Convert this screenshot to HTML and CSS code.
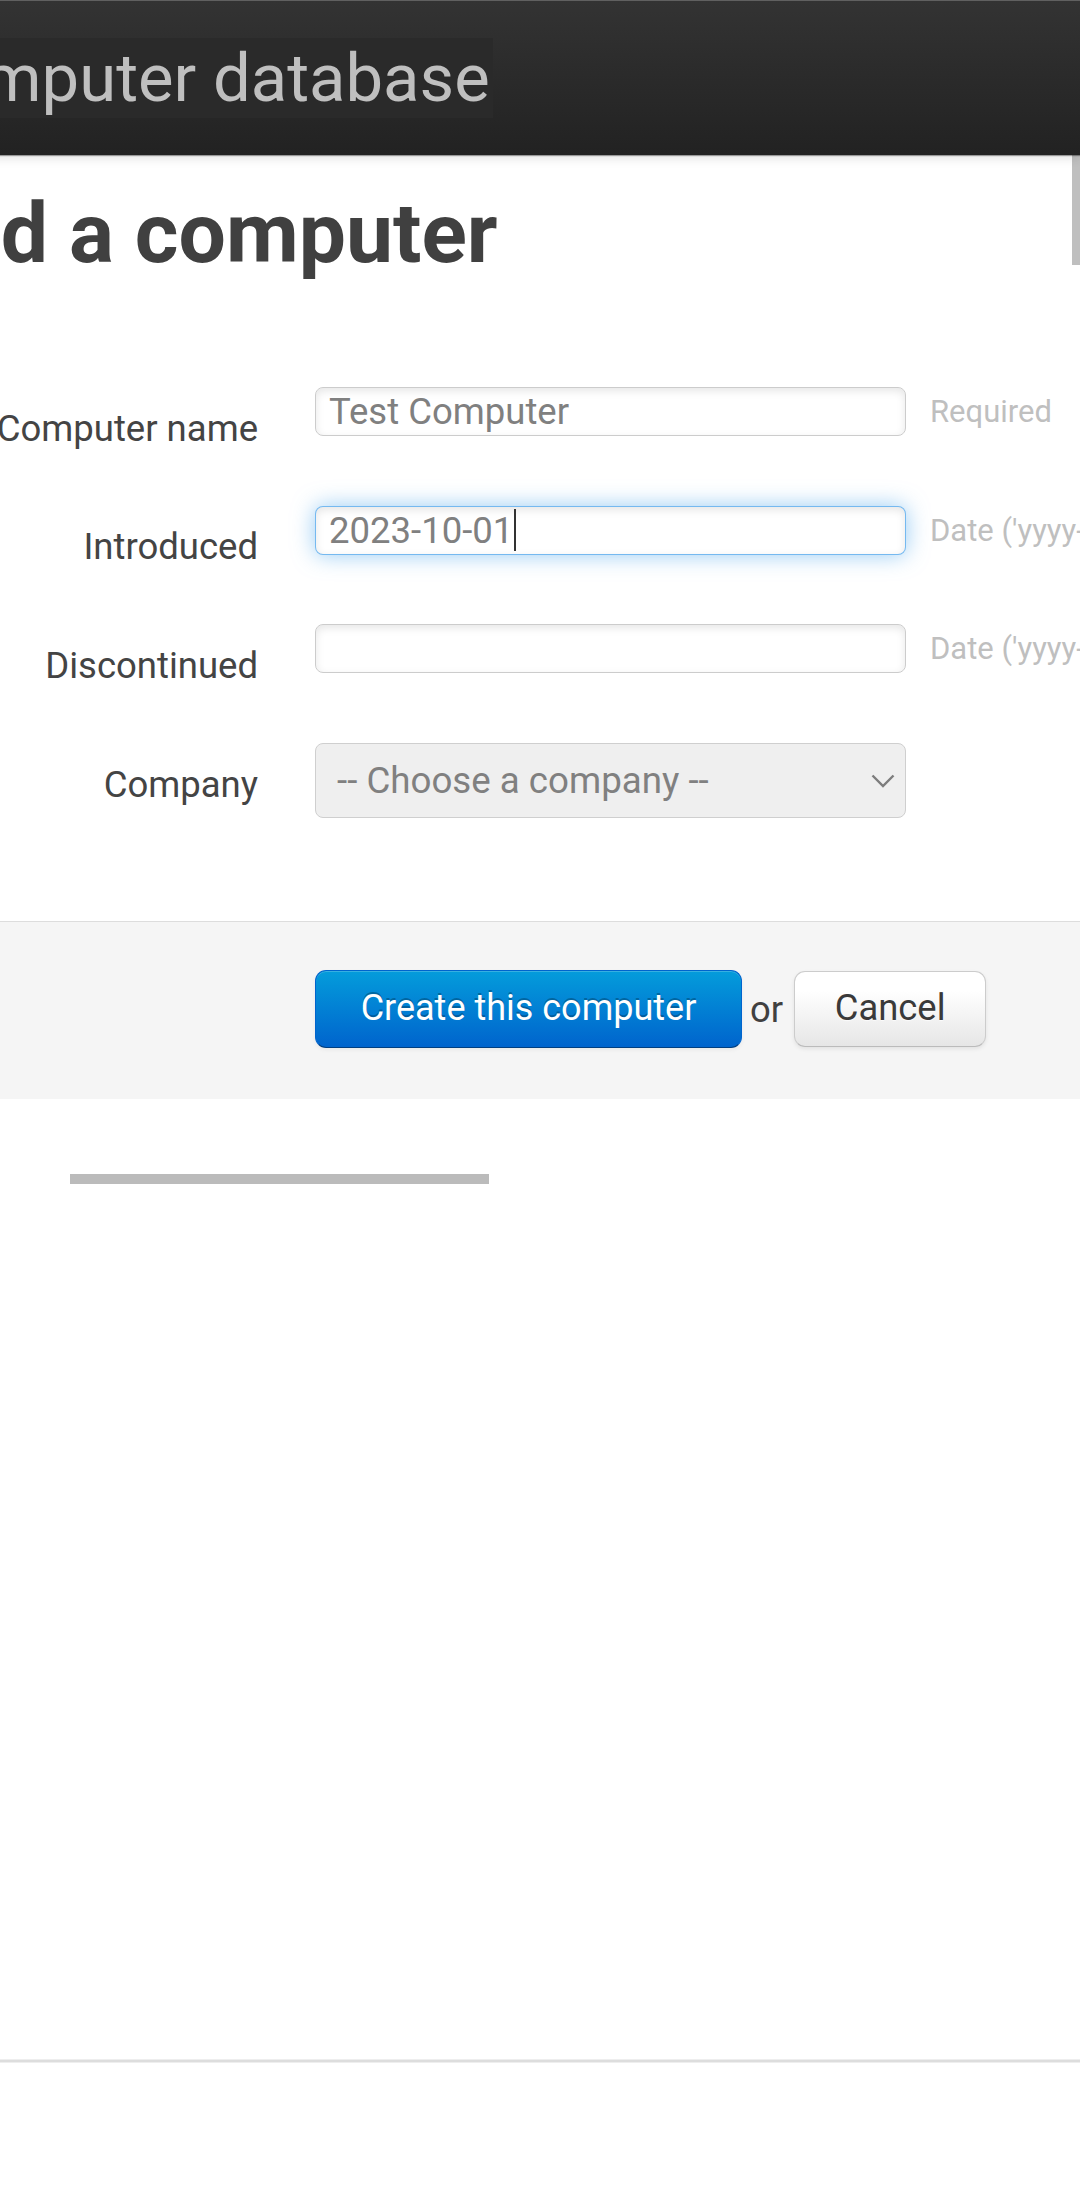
FILE: index.html
```html
<!DOCTYPE html>
<html lang="en">
<head>
<meta charset="utf-8">
<title>Computer database</title>
<link rel="stylesheet" href="styles.css">
</head>
<body>
<div class="viewport">
  <div class="page">
    <header class="topbar">
      <h1 class="brand"><a class="brand-link">Computer database</a></h1>
    </header>
    <main class="content">
      <h1 class="title">Add a computer</h1>
      <form class="form">
        <div class="row">
          <label class="label">Computer name</label>
          <div class="field">Test Computer</div>
          <span class="help">Required</span>
        </div>
        <div class="row">
          <label class="label">Introduced</label>
          <div class="field focused"><span>2023-10-01</span><span class="caret"></span></div>
          <span class="help">Date ('yyyy-MM-dd')</span>
        </div>
        <div class="row">
          <label class="label">Discontinued</label>
          <div class="field"></div>
          <span class="help">Date ('yyyy-MM-dd')</span>
        </div>
        <div class="row row-select">
          <label class="label">Company</label>
          <div class="select">
            <span>-- Choose a company --</span>
            <svg class="chevron" width="24" height="14" viewBox="0 0 24 14"><polyline points="1.5,1.5 12,12 22.5,1.5" fill="none" stroke="#7d7d7d" stroke-width="2.4"/></svg>
          </div>
        </div>
        <div class="actions">
          <button type="button" class="btn primary">Create this computer</button>
          <span class="or">or</span>
          <a class="btn cancel">Cancel</a>
        </div>
      </form>
      <div class="hscroll"></div>
      <div class="footer-line"></div>
    </main>
  </div>
  <div class="vscroll"></div>
</div>
</body>
</html>
```
FILE: styles.css
```css
html, body {
  margin: 0;
  padding: 0;
  background: #fff;
}
body {
  font-family: Roboto, "Liberation Sans", Arial, sans-serif;
}
.viewport {
  position: relative;
  width: 1080px;
  height: 2194px;
  overflow: hidden;
}
.page {
  margin-left: -99px;
}
.topbar {
  position: relative;
  z-index: 1;
  box-sizing: border-box;
  height: 155px;
  border-top: 1px solid #606060;
  background: linear-gradient(#333333, #222222);
  box-shadow: 0 1px 1px rgba(0, 0, 0, 0.35), 0 3px 10px rgba(0, 0, 0, 0.12);
}
.brand {
  margin: 0;
  padding-top: 37px;
  font-weight: 400;
  white-space: nowrap;
}
.brand-link {
  display: inline-block;
  height: 80px;
  padding-right: 3px;
  font-size: 67px;
  line-height: 80px;
  color: #bfbfbf;
  background: #2a2a2a;
}
.title {
  margin: 29px 0 0 -4px;
  font-size: 84px;
  line-height: 99px;
  font-weight: 700;
  color: #404040;
  white-space: nowrap;
}
.form {
  margin: 104px 0 0;
}
.row {
  display: flex;
  align-items: flex-start;
  height: 49px;
  margin-bottom: 69.7px;
  white-space: nowrap;
}
.row-select {
  height: 75px;
  margin-bottom: 0;
}
.label {
  flex: none;
  width: 357px;
  margin-right: 57px;
  padding-top: 16.5px;
  font-size: 36.5px;
  line-height: 49.5px;
  text-align: right;
  color: #444444;
}
.field {
  flex: none;
  box-sizing: border-box;
  width: 591px;
  height: 49px;
  padding: 0 13px;
  border: 1px solid #cccccc;
  border-radius: 8px;
  background: #fff;
  font-size: 36.5px;
  line-height: 47px;
  color: #808080;
  box-shadow: inset 0 3px 8px rgba(0, 0, 0, 0.1);
}
.field.focused {
  display: flex;
  align-items: center;
  border-color: rgba(82, 168, 236, 0.8);
  box-shadow: inset 0 3px 8px rgba(0, 0, 0, 0.1), 0 0 22px rgba(82, 168, 236, 0.6);
}
.caret {
  display: block;
  width: 2px;
  height: 42px;
  margin-left: 1px;
  background: #333;
}
.help {
  flex: none;
  margin-left: 24px;
  font-size: 31px;
  line-height: 49px;
  color: #bfbfbf;
}
.select {
  flex: none;
  display: flex;
  align-items: center;
  justify-content: space-between;
  box-sizing: border-box;
  width: 591px;
  height: 75px;
  padding: 0 10px 0 21px;
  border: 1px solid #cfcfcf;
  border-radius: 8px;
  background: #efefef;
  font-size: 36.7px;
  color: #808080;
}
.chevron {
  display: block;
  flex: none;
}
.actions {
  display: flex;
  align-items: center;
  margin-top: 103px;
  padding: 48px 0 51px 414px;
  border-top: 1px solid #dddddd;
  background: #f5f5f5;
  white-space: nowrap;
}
.btn {
  flex: none;
  display: block;
  box-sizing: border-box;
  margin: 0;
  font-family: Roboto, "Liberation Sans", Arial, sans-serif;
  text-align: center;
  border-radius: 11px;
}
.primary {
  width: 427px;
  height: 78px;
  padding: 0 0 3px;
  border: 1px solid;
  border-color: #0064cd #0064cd #003f81;
  background: linear-gradient(#049cdb, #0064cd);
  color: #fff;
  font-size: 36px;
  text-shadow: 0 -2px 0 rgba(0, 0, 0, 0.25);
  box-shadow: inset 0 1px 0 rgba(255, 255, 255, 0.2), 0 2px 4px rgba(0, 0, 0, 0.05);
}
.or {
  margin: 0 11px 0 8px;
  font-size: 36.4px;
  color: #404040;
}
.cancel {
  width: 192px;
  height: 76px;
  border: 1px solid #cccccc;
  border-bottom-color: #bbbbbb;
  background: linear-gradient(#ffffff, #ffffff 25%, #e6e6e6);
  color: #3a3a3a;
  font-size: 36.4px;
  line-height: 72px;
  text-shadow: 0 1px 1px rgba(255, 255, 255, 0.75);
  box-shadow: inset 0 1px 0 rgba(255, 255, 255, 0.2), 0 2px 4px rgba(0, 0, 0, 0.08);
}
.hscroll {
  width: 419px;
  height: 10px;
  margin: 75px 0 0 169px;
  background: #bbbbbb;
}
.footer-line {
  height: 2px;
  margin-top: 875px;
  border-top: 1px solid #eeeeee;
  border-bottom: 1px solid #eeeeee;
  background: #dddddd;
}
.vscroll {
  position: absolute;
  top: 0;
  right: 0;
  width: 8px;
  height: 265px;
  background: rgba(128, 128, 128, 0.5);
}
```
